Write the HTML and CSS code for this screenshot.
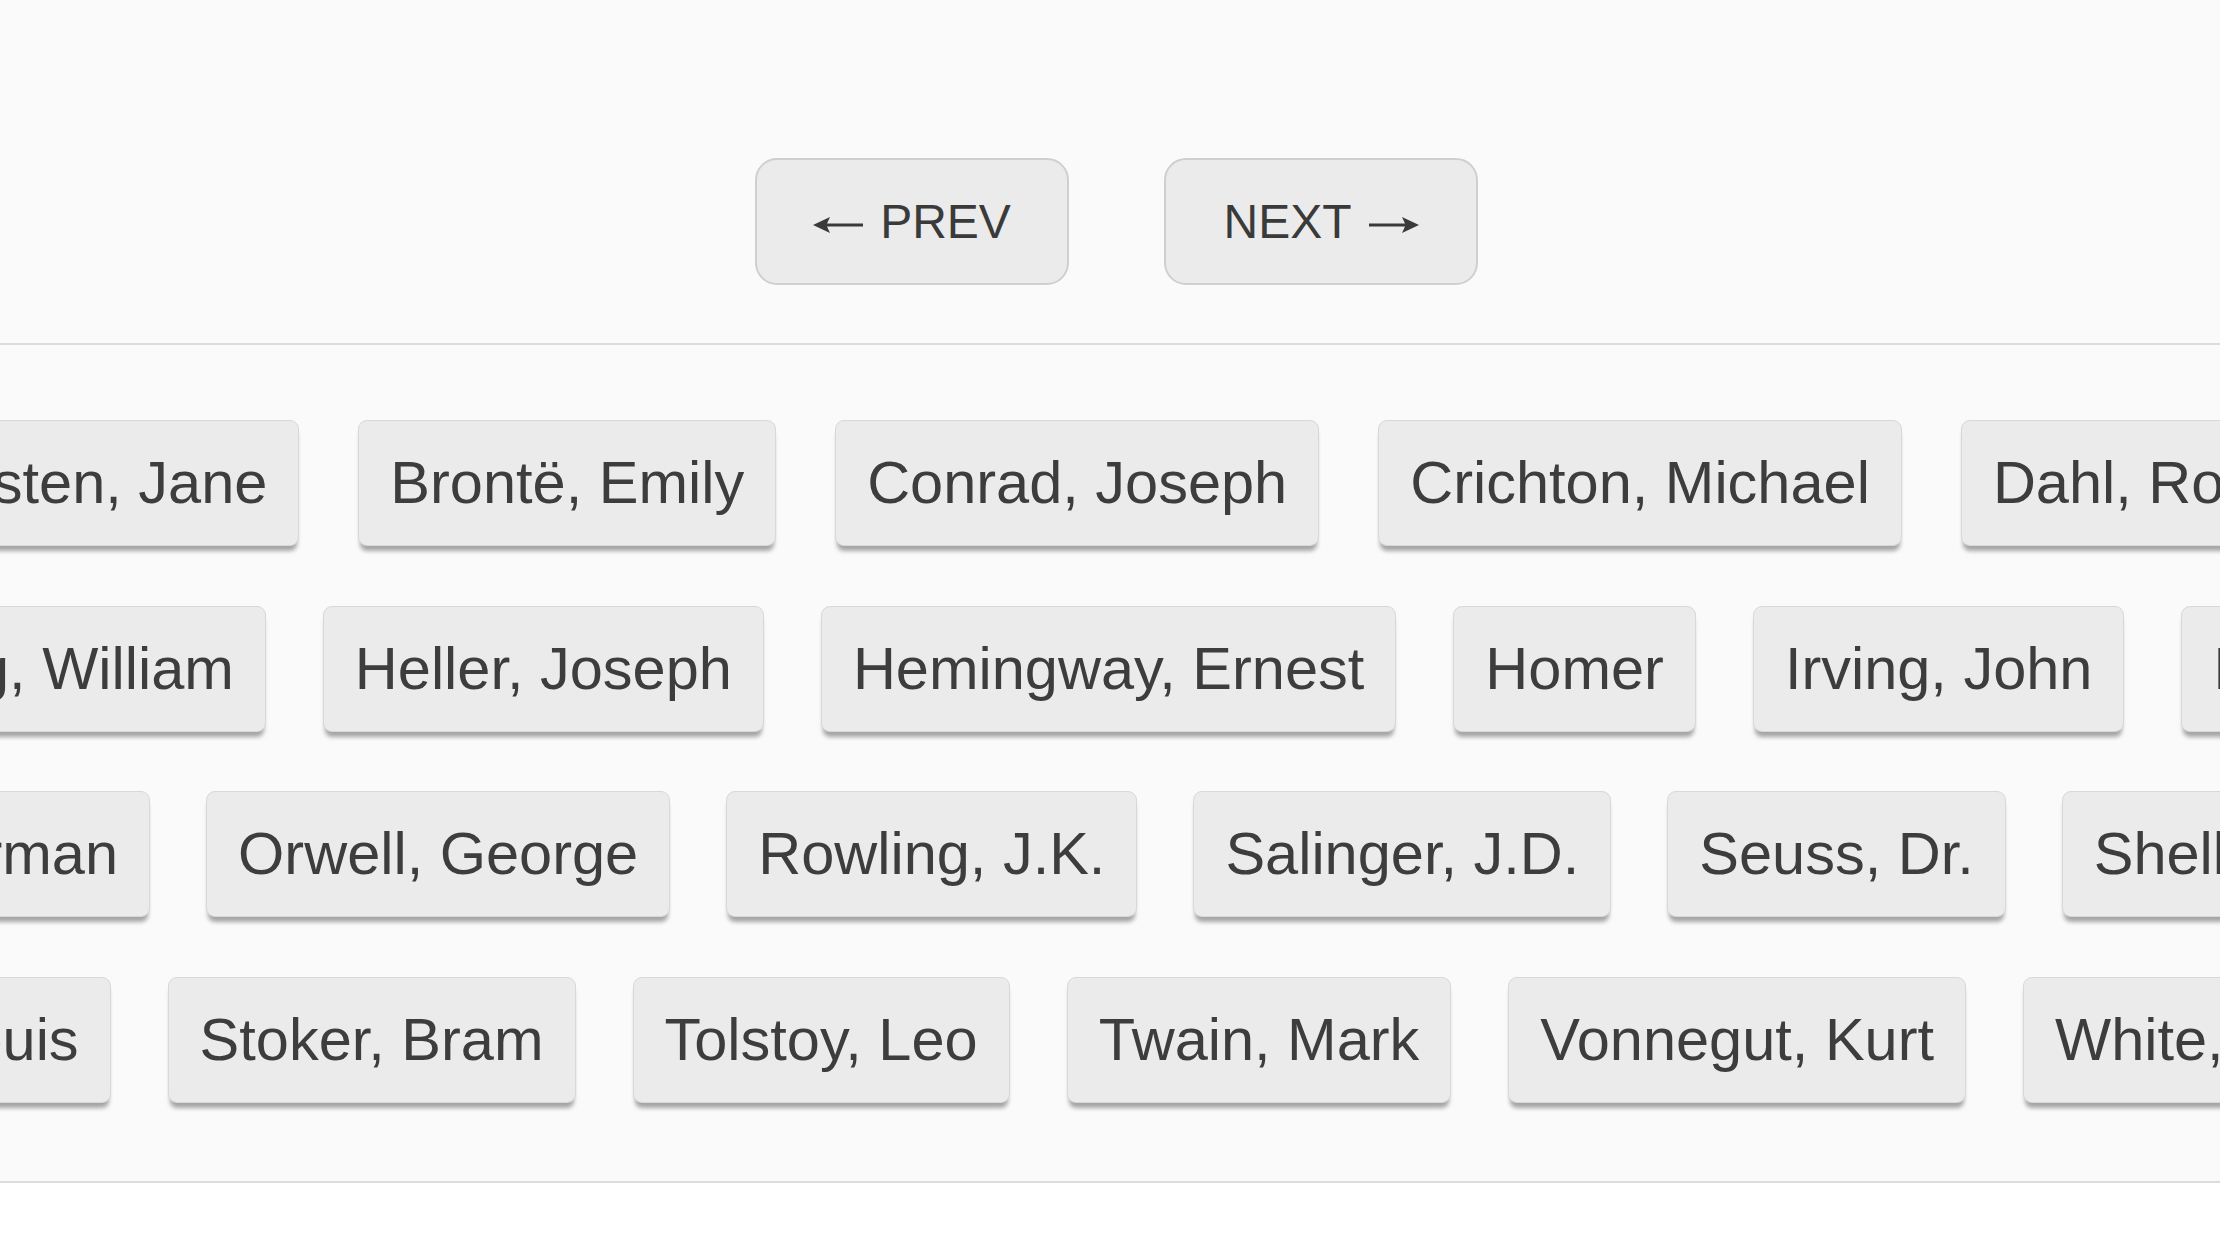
FILE: index.html
```html
<!DOCTYPE html>
<html lang="en">
<head>
  <meta charset="UTF-8">
  <meta name="viewport" content="width=device-width, initial-scale=1">
  <title>Authors</title>
  <link rel="stylesheet" href="styles.css">
</head>
<body>
  <div class="pager">
    <button class="page-btn">
      <svg class="arrow arrow-left" viewBox="0 0 50 20"><path d="M0 10 L17 2 L14 8.5 H50 V11.5 H14 L17 18 Z" fill="#3a3a3a"/></svg>PREV
    </button>
    <button class="page-btn">
      NEXT<svg class="arrow arrow-right" viewBox="0 0 50 20"><path d="M50 10 L33 2 L36 8.5 H0 V11.5 H36 L33 18 Z" fill="#3a3a3a"/></svg>
    </button>
  </div>

  <div class="authors">
    <div class="row row-1">
      <button class="author">Austen, Jane</button>
      <button class="author">Brontë, Emily</button>
      <button class="author">Conrad, Joseph</button>
      <button class="author">Crichton, Michael</button>
      <button class="author">Dahl, Roald</button>
      <button class="author">Dickens, Charles</button>
    </div>
    <div class="row row-2">
      <button class="author">Golding, William</button>
      <button class="author">Heller, Joseph</button>
      <button class="author">Hemingway, Ernest</button>
      <button class="author">Homer</button>
      <button class="author">Irving, John</button>
      <button class="author">Kafka, Franz</button>
    </div>
    <div class="row row-3">
      <button class="author">Melville, Herman</button>
      <button class="author">Orwell, George</button>
      <button class="author">Rowling, J.K.</button>
      <button class="author">Salinger, J.D.</button>
      <button class="author">Seuss, Dr.</button>
      <button class="author">Shelley, Mary</button>
    </div>
    <div class="row row-4">
      <button class="author">Stevenson, Robert Louis</button>
      <button class="author">Stoker, Bram</button>
      <button class="author">Tolstoy, Leo</button>
      <button class="author">Twain, Mark</button>
      <button class="author">Vonnegut, Kurt</button>
      <button class="author">White, E.B.</button>
    </div>
  </div>
</body>
</html>
```

FILE: styles.css
```css
body {
  margin: 0;
  background: #fff;
  font-family: "Liberation Sans", Arial, sans-serif;
  overflow: hidden;
}
.pager {
  height: 345px;
  box-sizing: border-box;
  padding: 158px 0 0 13px;
  display: flex;
  justify-content: center;
  gap: 95px;
  background: #fafafa;
  border-bottom: 2px solid #dcdcdc;
  box-shadow: 0 1px 1px #ececec;
}
.page-btn {
  width: 314px;
  height: 127px;
  box-sizing: border-box;
  padding: 0;
  font-family: inherit;
  font-size: 48px;
  line-height: 55px;
  color: #3a3a3a;
  background: #ebebeb;
  border: 2px solid #cfcfcf;
  border-radius: 22px;
  box-shadow: 0 0 3px rgba(255, 255, 255, 0.9);
  cursor: pointer;
}
.arrow {
  width: 50px;
  height: 20px;
  vertical-align: middle;
}
.arrow-left {
  margin-right: 17px;
}
.arrow-right {
  margin-left: 17px;
}
.authors {
  background: #fafafa;
  padding: 75px 0 78px;
  border-bottom: 2px solid #dcdcdc;
  box-shadow: 0 1px 1px #ececec;
  display: flex;
  flex-direction: column;
  gap: 59.5px;
  overflow: hidden;
}
.row {
  display: flex;
  gap: 57px;
  white-space: nowrap;
}
.row-1 { margin-left: -112px; gap: 59px; }
.row-2 { margin-left: -228px; }
.row-3 { margin-left: -357px; gap: 56px; }
.row-4 { margin-left: -605px; }
.author {
  flex: none;
  padding: 28px 31px;
  font-family: inherit;
  font-size: 59.5px;
  line-height: 68px;
  color: #3d3d3d;
  background: #ebebeb;
  border: 1px solid #d8d8d8;
  border-radius: 9px;
  box-shadow: 0 7px 4px -2px rgba(0, 0, 0, 0.34);
  cursor: pointer;
}
```
